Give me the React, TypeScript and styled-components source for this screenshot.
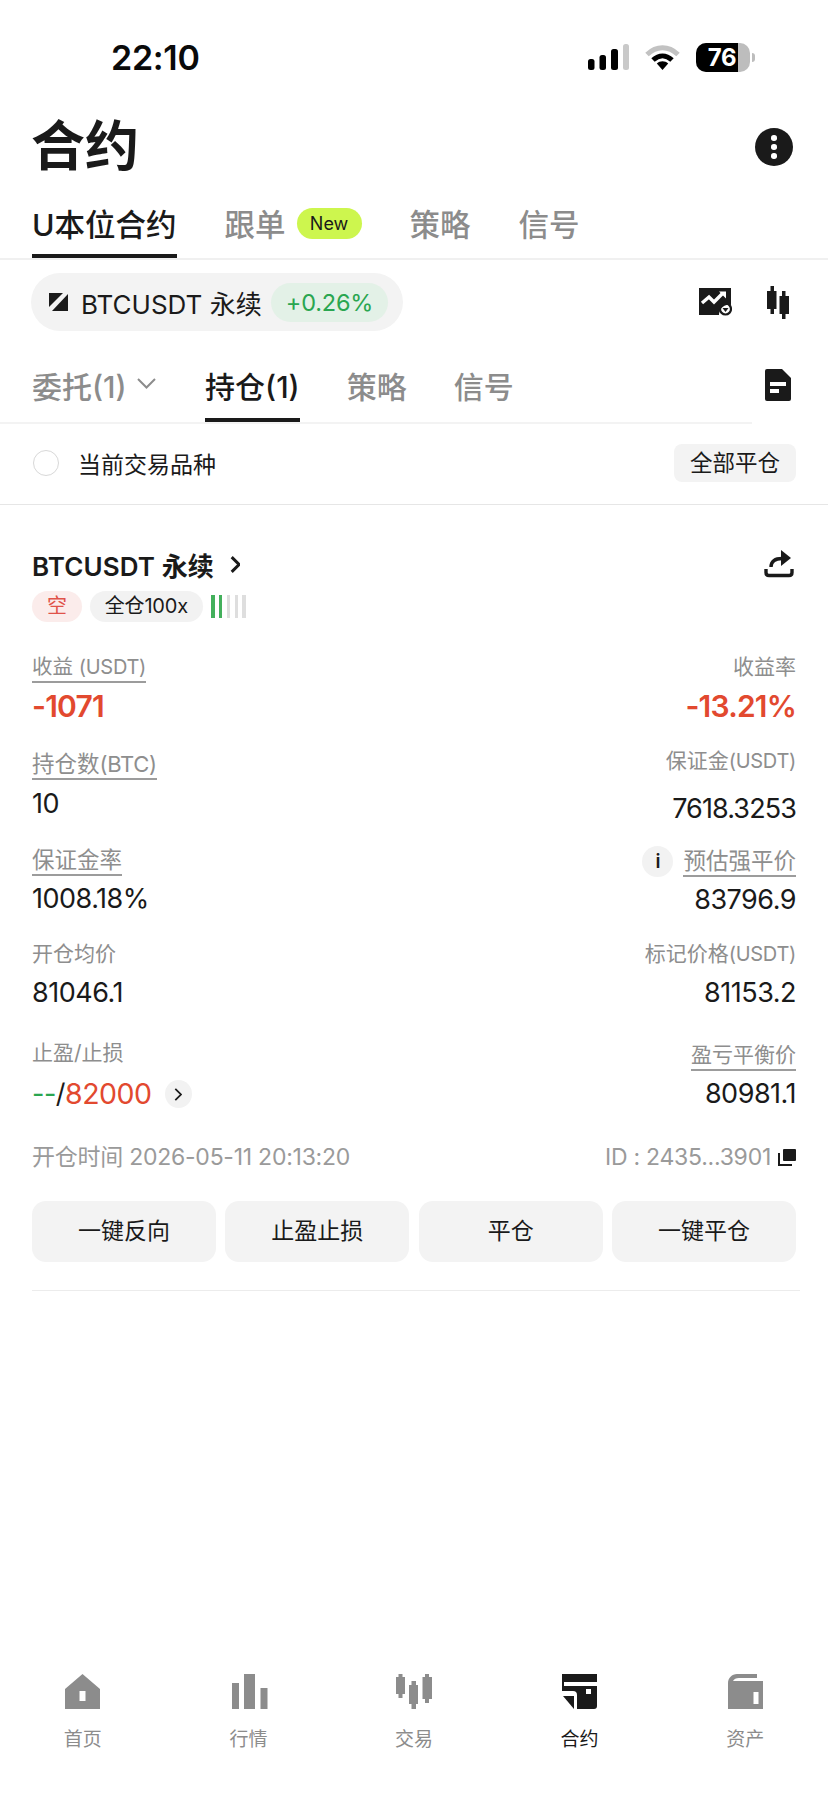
import React from 'react';
import styled, { createGlobalStyle } from 'styled-components';

const GlobalStyle = createGlobalStyle`
  html, body {
    margin: 0;
    padding: 0;
    background: #fff;
  }
  body {
    font-family: 'Inter', 'Noto Sans CJK SC', sans-serif;
    color: #1a1a1a;
  }
  * {
    box-sizing: border-box;
  }
`;

const Page = styled.div`
  width: 828px;
  height: 1795px;
  display: flex;
  flex-direction: column;
  overflow: hidden;
  background: #fff;
`;

const StatusBar = styled.div`
  height: 114px;
  padding: 0 73px 0 111px;
  display: flex;
  align-items: center;
  justify-content: space-between;
`;

const Clock = styled.span`
  font-size: 34px;
  font-weight: 600;
  letter-spacing: -0.3px;
  color: #0a0a0a;
`;

const StatusIcons = styled.div`
  display: flex;
  align-items: center;
  gap: 15px;
`;

const Battery = styled.div`
  position: relative;
  width: 54px;
  height: 29px;
  border-radius: 10px;
  overflow: hidden;
  background: #bdbdbd;
  display: flex;
`;

const BatteryFill = styled.div`
  width: 42px;
  background: #000;
  color: #fff;
  font-size: 24px;
  font-weight: 700;
  line-height: 29px;
  text-align: right;
  padding-right: 2px;
  letter-spacing: -0.5px;
`;

const BatteryWrap = styled.div`
  display: flex;
  align-items: center;
  gap: 2px;
`;

const BatteryNub = styled.div`
  width: 3px;
  height: 9px;
  border-radius: 0 3px 3px 0;
  background: #bdbdbd;
`;

const TitleRow = styled.div`
  height: 66px;
  padding: 0 35px 0 31px;
  display: flex;
  align-items: center;
  justify-content: space-between;
`;

const Title = styled.h1`
  margin: 0;
  font-size: 54px;
  line-height: 66px;
  font-weight: 700;
`;

const MoreButton = styled.div`
  width: 38px;
  height: 38px;
  border-radius: 50%;
  background: #1a1a1a;
  display: flex;
  flex-direction: column;
  align-items: center;
  justify-content: center;
  gap: 3.5px;
`;

const MoreDot = styled.span`
  width: 5.5px;
  height: 5.5px;
  border-radius: 50%;
  background: #fff;
`;

const TopTabs = styled.div`
  margin-top: 30px;
  padding-left: 32px;
  display: flex;
  gap: 48px;
  border-bottom: 2px solid #f0f0f0;
`;

const TabItem = styled.div<{ $active?: boolean; $pad?: number; $size?: number }>`
  height: ${(p) => (p.$pad ? 30 + p.$pad + 4 : 48)}px;
  display: flex;
  align-items: flex-start;
  font-size: ${(p) => p.$size || 30}px;
  line-height: 30px;
  font-weight: 500;
  color: ${(p) => (p.$active ? '#1a1a1a' : '#8c8c8c')};
  border-bottom: 4px solid ${(p) => (p.$active ? '#1a1a1a' : 'transparent')};
  white-space: nowrap;
`;

const NewBadge = styled.span`
  margin: -2px 0 0 11px;
  width: 65px;
  height: 31px;
  border-radius: 16px;
  background: #cdf64e;
  color: #1a1a1a;
  font-size: 18px;
  line-height: 31px;
  font-weight: 400;
  text-align: center;
`;

const SymbolRow = styled.div`
  padding: 13px 39px 0 31px;
  display: flex;
  align-items: center;
  justify-content: space-between;
`;

const SymbolPill = styled.div`
  width: 372px;
  height: 58px;
  border-radius: 29px;
  background: #f3f3f3;
  padding: 0 15px 0 18px;
  display: flex;
  align-items: center;
`;

const SymbolName = styled.span`
  margin-left: 13px;
  font-size: 26px;
  font-weight: 400;
  white-space: nowrap;
`;

const ChangeChip = styled.span`
  margin-left: auto;
  width: 117px;
  height: 39px;
  border-radius: 20px;
  background: #e3f1e7;
  color: #2aa650;
  font-size: 23.5px;
  letter-spacing: -0.2px;
  line-height: 39px;
  text-align: center;
`;

const ToolIcons = styled.div`
  display: flex;
  align-items: center;
  gap: 35px;
`;

const SubTabsRow = styled.div`
  margin-top: 41px;
  display: flex;
  align-items: flex-start;
`;

const SubTabs = styled.div`
  width: 752px;
  padding-left: 32px;
  display: flex;
  border-bottom: 2px solid #f3f3f3;
`;

const SubTab = styled(TabItem)`
  margin-right: 47px;
`;

const Chevron = styled.svg`
  margin: 6px 2.5px 0 10px;
`;

const DocIcon = styled.svg`
  margin: -3px 0 0 13px;
`;

const FilterRow = styled.div`
  height: 81px;
  padding: 0 32px 2px 33px;
  display: flex;
  align-items: center;
  border-bottom: 1px solid #e6e6e6;
`;

const Radio = styled.span`
  width: 26px;
  height: 26px;
  border-radius: 50%;
  border: 1.5px solid #d8d8d8;
`;

const FilterText = styled.span`
  margin-left: 19px;
  font-size: 23px;
`;

const CloseAll = styled.div`
  margin-left: auto;
  width: 122px;
  height: 38px;
  border-radius: 8px;
  background: #f3f3f3;
  font-size: 22.5px;
  line-height: 38px;
  text-align: center;
`;

const Card = styled.div`
  margin: 0 28px 0 32px;
  padding: 46px 0 28px;
  border-bottom: 1px solid #ececec;
`;

const CardHead = styled.div`
  height: 26px;
  padding-right: 6px;
  display: flex;
  align-items: center;
  justify-content: space-between;
`;

const CardTitle = styled.div`
  display: flex;
  align-items: center;
  gap: 16px;
  font-size: 26px;
  font-weight: 600;
  letter-spacing: 0.1px;
  white-space: nowrap;
`;

const TagRow = styled.div`
  margin-top: 14px;
  display: flex;
  align-items: center;
`;

const Tag = styled.span<{ $short?: boolean }>`
  height: 31px;
  border-radius: 16px;
  padding: 0 15px;
  margin-right: 8px;
  background: ${(p) => (p.$short ? '#fbeceb' : '#f2f2f2')};
  color: ${(p) => (p.$short ? '#e0534a' : '#1a1a1a')};
  font-size: 20px;
  line-height: 31px;
  letter-spacing: -0.2px;
`;

const RiskBars = styled.div`
  display: flex;
  gap: 4.3px;
`;

const RiskBar = styled.span<{ $on?: boolean }>`
  width: 3.6px;
  height: 23px;
  background: ${(p) => (p.$on ? '#43b05c' : '#dedede')};
`;

const StatRow = styled.div<{ $top: number }>`
  margin-top: ${(p) => p.$top}px;
  padding-right: 4px;
  display: flex;
  justify-content: space-between;
  align-items: flex-start;
`;

const Stat = styled.div<{ $right?: boolean; $drop?: number }>`
  display: flex;
  flex-direction: column;
  align-items: ${(p) => (p.$right ? 'flex-end' : 'flex-start')};
  margin-top: ${(p) => p.$drop || 0}px;
`;

const LabelLine = styled.div`
  display: flex;
  align-items: center;
  gap: 10px;
`;

const Label = styled.span<{ $dashed?: boolean; $size?: number }>`
  font-size: ${(p) => p.$size || (p.$dashed ? 22.5 : 21)}px;
  line-height: 28px;
  height: ${(p) => (p.$dashed ? 30 : 28)}px;
  color: #8e8e8e;
  white-space: nowrap;
  border-bottom: ${(p) => (p.$dashed ? '2px solid #9c9c9c' : 'none')};
`;

const Unit = styled.span<{ $size?: number }>`
  font-size: ${(p) => p.$size || 20}px;
  letter-spacing: -0.3px;
`;

const Value = styled.div<{ $gap: number; $big?: boolean; $tight?: boolean }>`
  margin-top: ${(p) => p.$gap}px;
  display: flex;
  align-items: center;
  font-size: ${(p) => (p.$big ? 30 : 27)}px;
  line-height: 32px;
  font-weight: ${(p) => (p.$big ? 600 : 400)};
  letter-spacing: ${(p) => (p.$big ? -0.8 : p.$tight ? -0.9 : -0.5)}px;
  color: ${(p) => (p.$big ? '#e2492f' : '#1a1a1a')};
  white-space: nowrap;
`;

const ValueColor = styled.span<{ $color: string; $size?: number }>`
  color: ${(p) => p.$color};
  font-size: ${(p) => p.$size || 27}px;
`;

const InfoDot = styled.span`
  width: 31px;
  height: 31px;
  border-radius: 50%;
  background: #f2f2f2;
  font-size: 19px;
  font-weight: 600;
  line-height: 31px;
  text-align: center;
`;

const ChevronChip = styled.span`
  margin-left: 13px;
  width: 27px;
  height: 28px;
  border-radius: 50%;
  background: #f2f2f2;
  display: flex;
  align-items: center;
  justify-content: center;
`;

const MetaRow = styled.div`
  margin-top: 33px;
  padding-right: 4px;
  display: flex;
  justify-content: space-between;
  align-items: center;
  font-size: 23px;
  line-height: 28px;
  color: #9a9a9a;
  letter-spacing: -0.25px;
`;

const MetaId = styled.span`
  display: flex;
  align-items: center;
  gap: 7px;
`;

const Actions = styled.div`
  margin-top: 30px;
  padding-right: 4px;
  display: grid;
  grid-template-columns: repeat(4, 1fr);
  gap: 9.5px;
`;

const ActionButton = styled.div`
  height: 61px;
  border-radius: 14px;
  background: #f3f3f3;
  font-size: 23px;
  line-height: 61px;
  text-align: center;
`;

const TabBar = styled.div`
  margin-top: auto;
  height: 121px;
  display: grid;
  grid-template-columns: repeat(5, 1fr);
`;

const NavItem = styled.div<{ $active?: boolean }>`
  display: flex;
  flex-direction: column;
  align-items: center;
  gap: 20px;
  font-size: 19px;
  line-height: 22px;
  color: ${(p) => (p.$active ? '#1a1a1a' : '#8c8c8c')};
`;

const MarketSvg = styled.svg`
  margin-left: 3px;
`;

const RISK = [true, true, false, false, false];
const ACTIONS = ['一键反向', '止盈止损', '平仓', '一键平仓'];

const SignalIcon = () => (
  <svg width="41" height="26" viewBox="0 0 41 26">
    <rect x="0" y="15" width="6.5" height="11" rx="2.5" fill="#000" />
    <rect x="11.5" y="11" width="6.5" height="15" rx="2.5" fill="#000" />
    <rect x="23" y="5" width="7" height="21" rx="2.5" fill="#000" />
    <rect x="35" y="0" width="6" height="26" rx="2.5" fill="#c9c9c9" />
  </svg>
);

const WifiIcon = () => (
  <svg width="37" height="26" viewBox="0 0 37 26">
    <path d="M3 10.5C12.5 1.5 24.5 1.5 34 10.5" fill="none" stroke="#c2c2c2" strokeWidth="5" />
    <path d="M9 16C15 10.5 22 10.5 28 16" fill="none" stroke="#000" strokeWidth="5" />
    <path d="M12.8 19.6C16 16.6 21 16.6 24.2 19.6L18.5 26Z" fill="#000" />
  </svg>
);

const LogoMark = () => (
  <svg width="19" height="18" viewBox="0 0 19 18">
    <path d="M0 0H14L0 14Z" fill="#1a1a1a" />
    <path d="M19 1V18H3Z" fill="#1a1a1a" />
  </svg>
);

const ChartIcon = () => (
  <svg width="33" height="28" viewBox="0 0 33 28">
    <path d="M0 0H32V17A10 10 0 0 0 20 27H0Z" fill="#1a1a1a" />
    <path d="M3 15L10 9L15 14L24 5" fill="none" stroke="#fff" strokeWidth="3.4" />
    <path d="M20 3.5H27V10.5Z" fill="#fff" />
    <circle cx="26.5" cy="21" r="5.5" fill="none" stroke="#1a1a1a" strokeWidth="2.2" />
    <path d="M23.5 20H29.5L26.5 24Z" fill="#1a1a1a" />
  </svg>
);

const CandlesIcon = () => (
  <svg width="22" height="33" viewBox="0 0 22 33">
    <path d="M3.5 0H7V5H9.5V23H7V28H3.5V23H0V5H3.5Z" fill="#1a1a1a" />
    <path d="M15 5H18.5V10H22V28H18.5V33H15V28H12.5V10H15Z" fill="#1a1a1a" />
  </svg>
);

const ShareIcon = () => (
  <svg width="30" height="28" viewBox="0 0 30 28">
    <path d="M7 17C7 11 11 8.5 18 8.5" fill="none" stroke="#1a1a1a" strokeWidth="3.4" />
    <path d="M17 0L27 8L17 16Z" fill="#1a1a1a" />
    <path d="M2 19V22.5C2 24.5 3.5 25.5 5 25.5H25C26.5 25.5 28 24.5 28 22.5V19" fill="none" stroke="#1a1a1a" strokeWidth="3.4" />
  </svg>
);

const CopyIcon = () => (
  <svg width="18" height="17" viewBox="0 0 18 17">
    <rect x="5" y="0" width="13" height="12" rx="1" fill="#1a1a1a" />
    <path d="M1 4V16H14" fill="none" stroke="#1a1a1a" strokeWidth="2" />
  </svg>
);

const ChevronRight = ({ size, weight }: { size: number; weight: number }) => (
  <svg width={size * 0.6} height={size} viewBox="0 0 9 15">
    <path d="M1.5 1L8 7.5L1.5 14" fill="none" stroke="#1a1a1a" strokeWidth={weight} />
  </svg>
);

const HomeNav = () => (
  <svg width="35" height="35" viewBox="0 0 35 35">
    <path fillRule="evenodd" d="M17.5 0L35 15V35H0V15ZM14.5 17V27H20.5V17Z" fill="#8c8c8c" />
  </svg>
);

const MarketNav = () => (
  <MarketSvg width="36" height="35" viewBox="0 0 36 35">
    <rect x="0" y="9" width="7" height="26" fill="#8c8c8c" />
    <rect x="12" y="0" width="11" height="35" fill="#8c8c8c" />
    <rect x="28.500" y="14" width="7" height="21" fill="#8c8c8c" />
  </MarketSvg>
);

const TradeNav = () => (
  <svg width="36" height="35" viewBox="0 0 36 35">
    <path d="M2.500 0H6.500V3H9V20H6.500V24H2.500V20H0V3H2.500Z" fill="#8c8c8c" />
    <path d="M15.500 7H20V11H22V30H20V35H15.500V30H13V11H15.500Z" fill="#8c8c8c" />
    <path d="M29 0H33V3H36V25H33V29H29V25H26.500V3H29Z" fill="#8c8c8c" />
  </svg>
);

const ContractNav = () => (
  <svg width="35" height="35" viewBox="0 0 35 35">
    <path d="M0 0H35V32A3 3 0 0 1 32 35H15V21A4 4 0 0 0 11 17H0Z" fill="#1a1a1a" />
    <path d="M1 22H12V35Z" fill="#1a1a1a" />
    <rect x="2" y="8" width="33" height="4" fill="#fff" />
    <rect x="24" y="15" width="5" height="5" fill="#fff" />
  </svg>
);

const AssetNav = () => (
  <svg width="35" height="35" viewBox="0 0 35 35">
    <path d="M9 7H35V35H0V9C0 4 4 0 9 0H29V4H11C8 4 6 5 5 7Z" fill="#8c8c8c" />
    <rect x="25.500" y="18" width="5" height="12" fill="#fff" />
  </svg>
);

const NAV = [
  { label: '首页', icon: <HomeNav /> },
  { label: '行情', icon: <MarketNav /> },
  { label: '交易', icon: <TradeNav /> },
  { label: '合约', icon: <ContractNav />, active: true },
  { label: '资产', icon: <AssetNav /> },
];

const App: React.FC = () => (
  <Page>
    <GlobalStyle />
    <StatusBar>
      <Clock>22:10</Clock>
      <StatusIcons>
        <SignalIcon />
        <WifiIcon />
        <BatteryWrap>
          <Battery>
            <BatteryFill>76</BatteryFill>
          </Battery>
          <BatteryNub />
        </BatteryWrap>
      </StatusIcons>
    </StatusBar>

    <TitleRow>
      <Title>合约</Title>
      <MoreButton>
        <MoreDot />
        <MoreDot />
        <MoreDot />
      </MoreButton>
    </TitleRow>

    <TopTabs>
      <TabItem $active $size={30.5}>U本位合约</TabItem>
      <TabItem $size={30.5}>
        跟单<NewBadge>New</NewBadge>
      </TabItem>
      <TabItem $size={30.5}>策略</TabItem>
      <TabItem $size={30.5}>信号</TabItem>
    </TopTabs>

    <SymbolRow>
      <SymbolPill>
        <LogoMark />
        <SymbolName>BTCUSDT 永续</SymbolName>
        <ChangeChip>+0.26%</ChangeChip>
      </SymbolPill>
      <ToolIcons>
        <ChartIcon />
        <CandlesIcon />
      </ToolIcons>
    </SymbolRow>

    <SubTabsRow>
      <SubTabs>
        <SubTab $pad={16}>
          委托(1)
          <Chevron width="19" height="11" viewBox="0 0 19 11">
            <path d="M1 1L9.500 9.500L18 1" fill="none" stroke="#8c8c8c" strokeWidth="2" />
          </Chevron>
        </SubTab>
        <SubTab $pad={16} $active>持仓(1)</SubTab>
        <SubTab $pad={16}>策略</SubTab>
        <SubTab $pad={16}>信号</SubTab>
      </SubTabs>
      <DocIcon width="26" height="32" viewBox="0 0 26 32">
        <path d="M2 0H17L26 9V30A2 2 0 0 1 24 32H2A2 2 0 0 1 0 30V2A2 2 0 0 1 2 0Z" fill="#1a1a1a" />
        <rect x="5" y="13" width="16" height="4" fill="#fff" />
        <rect x="5" y="20" width="9" height="4" fill="#fff" />
      </DocIcon>
    </SubTabsRow>

    <FilterRow>
      <Radio />
      <FilterText>当前交易品种</FilterText>
      <CloseAll>全部平仓</CloseAll>
    </FilterRow>

    <Card>
      <CardHead>
        <CardTitle>
          BTCUSDT 永续
          <ChevronRight size={17} weight={2.6} />
        </CardTitle>
        <ShareIcon />
      </CardHead>
      <TagRow>
        <Tag $short>空</Tag>
        <Tag>全仓100x</Tag>
        <RiskBars>
          {RISK.map((on, i) => (
            <RiskBar key={i} $on={on} />
          ))}
        </RiskBars>
      </TagRow>

      <StatRow $top={31}>
        <Stat>
          <Label $dashed $size={20.5}>收益 <Unit>(USDT)</Unit></Label>
          <Value $gap={7} $big>-1071</Value>
        </Stat>
        <Stat $right>
          <Label>收益率</Label>
          <Value $gap={9} $big>-13.21%</Value>
        </Stat>
      </StatRow>

      <StatRow $top={28}>
        <Stat>
          <Label $dashed>持仓数<Unit $size={22}>(BTC)</Unit></Label>
          <Value $gap={8}>10</Value>
        </Stat>
        <Stat $right $drop={-3}>
          <Label>保证金<Unit>(USDT)</Unit></Label>
          <Value $gap={18} $tight>7618.3253</Value>
        </Stat>
      </StatRow>

      <StatRow $top={21}>
        <Stat>
          <Label $dashed>保证金率</Label>
          <Value $gap={7}>1008.18%</Value>
        </Stat>
        <Stat $right>
          <LabelLine>
            <InfoDot>i</InfoDot>
            <Label $dashed>预估强平价</Label>
          </LabelLine>
          <Value $gap={7}>83796.9</Value>
        </Stat>
      </StatRow>

      <StatRow $top={24}>
        <Stat>
          <Label>开仓均价</Label>
          <Value $gap={9}>81046.1</Value>
        </Stat>
        <Stat $right>
          <Label>标记价格<Unit>(USDT)</Unit></Label>
          <Value $gap={9}>81153.2</Value>
        </Stat>
      </StatRow>

      <StatRow $top={30}>
        <Stat>
          <Label>止盈/止损</Label>
          <Value $gap={11}>
            <ValueColor $color="#2aa650">--</ValueColor>/
            <ValueColor $color="#e2492f" $size={28.5}>82000</ValueColor>
            <ChevronChip>
              <ChevronRight size={13} weight={2} />
            </ChevronChip>
          </Value>
        </Stat>
        <Stat $right $drop={2}>
          <Label $dashed $size={21}>盈亏平衡价</Label>
          <Value $gap={7}>80981.1</Value>
        </Stat>
      </StatRow>

      <MetaRow>
        <span>开仓时间 2026-05-11 20:13:20</span>
        <MetaId>
          ID : 2435...3901
          <CopyIcon />
        </MetaId>
      </MetaRow>

      <Actions>
        {ACTIONS.map((a) => (
          <ActionButton key={a}>{a}</ActionButton>
        ))}
      </Actions>
    </Card>

    <TabBar>
      {NAV.map((n) => (
        <NavItem key={n.label} $active={n.active}>
          {n.icon}
          {n.label}
        </NavItem>
      ))}
    </TabBar>
  </Page>
);

export default App;
